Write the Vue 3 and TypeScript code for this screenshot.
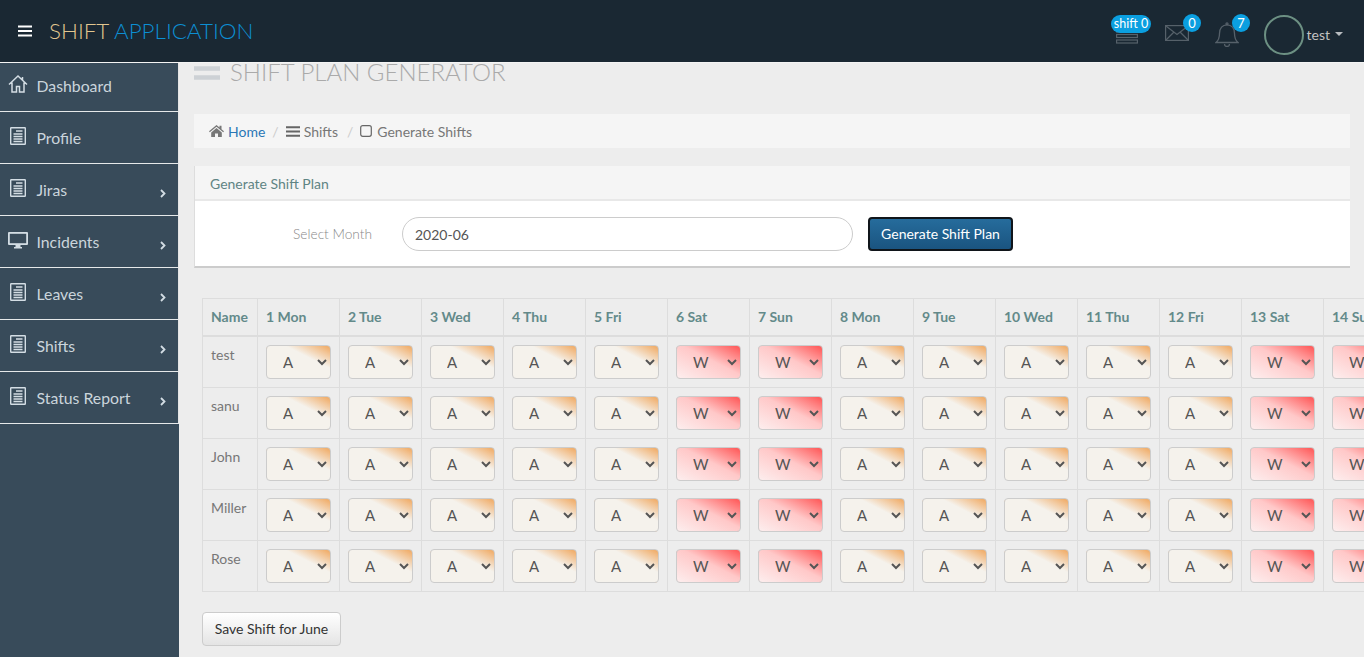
<script setup lang="ts">
interface NavItem { label: string; icon: 'home' | 'doc' | 'monitor'; arrow: boolean }
const nav: NavItem[] = [
  { label: 'Dashboard', icon: 'home', arrow: false },
  { label: 'Profile', icon: 'doc', arrow: false },
  { label: 'Jiras', icon: 'doc', arrow: true },
  { label: 'Incidents', icon: 'monitor', arrow: true },
  { label: 'Leaves', icon: 'doc', arrow: true },
  { label: 'Shifts', icon: 'doc', arrow: true },
  { label: 'Status Report', icon: 'doc', arrow: true },
]
const names = ['Mon', 'Tue', 'Wed', 'Thu', 'Fri', 'Sat', 'Sun']
const days = Array.from({ length: 30 }, (_, i) => {
  const name = names[i % 7]
  return { n: i + 1, label: `${i + 1} ${name}`, weekend: name === 'Sat' || name === 'Sun' }
})
const people = ['test', 'sanu', 'John', 'Miller', 'Rose']
</script>

<template>
  <div class="page">
    <header class="topbar">
      <svg class="burger" width="14" height="12" viewBox="0 0 14 12"><path d="M0 1.500h14M0 6h14M0 10.500h14" stroke="#fff" stroke-width="2"/></svg>
      <div class="logo"><span class="logo-a">SHIFT</span> <span class="logo-b">APPLICATION</span></div>
      <div class="top-right">
        <div class="tool tool-stack">
          <svg width="22" height="16" viewBox="0 0 22 16" fill="none" stroke="#56616a" stroke-width="1.200"><rect x="0.600" y="1" width="20.800" height="3"/><rect x="0.600" y="6.500" width="20.800" height="3"/><rect x="0.600" y="12" width="20.800" height="3"/></svg>
          <span class="badge badge-wide">shift 0</span>
        </div>
        <div class="tool tool-mail">
          <svg width="24" height="16" viewBox="0 0 24 16" fill="none" stroke="#56616a" stroke-width="1.200"><rect x="0.600" y="0.600" width="22.800" height="14.800"/><path d="M1 1l11 8.500L23 1M1 15l8-8M23 15l-8-8"/></svg>
          <span class="badge">0</span>
        </div>
        <div class="tool tool-bell">
          <svg width="24" height="25" viewBox="0 0 24 25" fill="none" stroke="#56616a" stroke-width="1.300"><path d="M1 20.500c3-2.500 3.500-5 3.500-9C4.500 6 7.500 2.800 12 2.800S19.500 6 19.500 11.500c0 4 .5 6.500 3.500 9z"/><circle cx="12" cy="1.800" r="1"/><path d="M9.500 22a2.500 2.500 0 0 0 5 0"/></svg>
          <span class="badge">7</span>
        </div>
        <div class="avatar"></div>
        <span class="user">test</span>
        <span class="caret"></span>
      </div>
    </header>

    <div class="shell">
      <aside class="sidebar">
        <ul class="menu">
          <li v-for="item in nav" :key="item.label" class="menu-item">
            <svg v-if="item.icon === 'home'" class="mi" width="20" height="20" viewBox="0 0 20 20" fill="none" stroke="#d3dde4" stroke-width="1.500"><path d="M1 10.500L10 2l9 8.500M4 8.500V18h4.500v-5.500h3V18H16V8.500M14.500 3v3"/></svg>
            <svg v-else-if="item.icon === 'doc'" class="mi" width="20" height="20" viewBox="0 0 20 20" fill="none" stroke="#d3dde4" stroke-width="1.400"><rect x="2.700" y="1.700" width="14.600" height="16.600" rx="0.500"/><path d="M8 5h6.500M5.500 8h9M5.500 10.500h9M5.500 13h9M5.500 15.500h9"/></svg>
            <svg v-else class="mi" width="20" height="20" viewBox="0 0 20 20"><path fill="#d3dde4" d="M1 2h18a1 1 0 0 1 1 1v11a1 1 0 0 1-1 1h-6.500v2H14v1.500H6V17h1.500v-2H1a1 1 0 0 1-1-1V3a1 1 0 0 1 1-1z"/><rect x="1.800" y="3.800" width="16.400" height="9.400" fill="#384b5a"/></svg>
            <span class="ml">{{ item.label }}</span>
            <svg v-if="item.arrow" class="chev" width="6" height="9" viewBox="0 0 6 9" fill="none" stroke="#d3dde4" stroke-width="1.800"><path d="M1 1l3.500 3.500L1 8"/></svg>
          </li>
        </ul>
      </aside>

      <main class="main">
        <div class="title-row">
          <svg class="title-icon" width="26" height="14" viewBox="0 0 26 14"><path d="M0 2.500h26M0 11.500h26" stroke="#cdd1d5" stroke-width="4.500"/></svg>
          <h1 class="title">SHIFT PLAN GENERATOR</h1>
        </div>

        <nav class="crumbs">
          <svg width="15" height="12" viewBox="0 0 15 12"><path fill="#777" d="M7.500 0L0 6.300l.8.900L7.500 1.700l6.700 5.500.8-.9L12.500 4.200V.8h-2v1.700zM2.200 7.500V12h3.800V8.500h3V12h3.800V7.500L7.500 3.100z"/></svg>
          <a class="crumb-link">Home</a>
          <span class="sep">/</span>
          <svg width="14" height="11" viewBox="0 0 14 11"><path d="M0 1.200h14M0 5.500h14M0 9.800h14" stroke="#666" stroke-width="2"/></svg>
          <span>Shifts</span>
          <span class="sep sep-last">/</span>
          <svg class="check" width="12" height="12" viewBox="0 0 12 12" fill="none"><rect x="0.700" y="0.700" width="10.600" height="10.600" rx="2" stroke="#666" stroke-width="1.200"/></svg>
          <span class="crumb-last">Generate Shifts</span>
        </nav>

        <section class="panel">
          <div class="panel-head">Generate Shift Plan</div>
          <form class="panel-body" @submit.prevent>
            <label class="field-label" for="month">Select Month</label>
            <input id="month" class="month" value="2020-06" />
            <button class="gen">Generate Shift Plan</button>
          </form>
        </section>

        <div class="table-wrap">
          <table class="grid">
            <thead>
              <tr>
                <th class="name-col">Name</th>
                <th v-for="d in days" :key="d.n">{{ d.label }}</th>
              </tr>
            </thead>
            <tbody>
              <tr v-for="p in people" :key="p">
                <td class="name-col">{{ p }}</td>
                <td v-for="d in days" :key="d.n">
                  <select class="shift" :class="{ off: d.weekend }" :value="d.weekend ? 'W' : 'A'">
                    <option>A</option>
                    <option>B</option>
                    <option>W</option>
                  </select>
                </td>
              </tr>
            </tbody>
          </table>
        </div>

        <button class="save">Save Shift for June</button>
      </main>
    </div>
  </div>
</template>

<style scoped>
.page {
  height: 657px;
  width: 1364px;
  overflow: hidden;
  display: flex;
  flex-direction: column;
  background: #ededed;
  font-family: Lato, "Open Sans", sans-serif;
  font-size: 14px;
}
.topbar {
  flex: none;
  box-sizing: border-box;
  height: 63px;
  border-bottom: 1px solid #f4f4f4;
  background: #1a2833;
  display: flex;
  align-items: center;
  padding-left: 18px;
}
.burger { flex: none; }
.logo {
  margin-left: 17px;
  margin-top: -1px;
  font-size: 22.400px;
  font-weight: 300;
  white-space: pre;
}
.logo-a { color: #e2c68f; }
.logo-b { color: #0c8fd3; }
.top-right {
  margin-left: auto;
  display: flex;
  align-items: center;
  height: 100%;
  padding-right: 21px;
}
.tool { position: relative; display: flex; }
.tool-stack { margin-top: 10px; margin-right: 27px; }
.tool-mail { margin-top: 3px; margin-right: 26px; }
.tool-bell { margin-top: 6px; margin-right: 25px; }
.badge {
  position: absolute;
  height: 18px;
  min-width: 18px;
  border-radius: 9px;
  background: #0b9fe0;
  color: #fff;
  font-size: 13px;
  line-height: 18px;
  text-align: center;
}
.tool-stack .badge-wide { left: -5px; top: -13px; width: 40px; white-space: nowrap; font-size: 12.500px; }
.tool-mail .badge { top: -11px; left: 18px; }
.tool-bell .badge { top: -8px; left: 17px; }
.avatar {
  width: 40px;
  height: 40px;
  box-sizing: border-box;
  border: 2px solid #6c9083;
  border-radius: 50%;
  margin-top: 8px;
}
.user { color: #c2c2c2; margin-left: 2.500px; margin-top: 7px; }
.caret {
  margin-left: 5px;
  margin-top: 6px;
  border-top: 4px solid #b8bcc0;
  border-left: 4px solid transparent;
  border-right: 4px solid transparent;
}
.shell { flex: 1; display: flex; min-height: 0; }
.sidebar { flex: none; width: 179px; background: #384b5a; }
.menu { margin: 0; padding: 0; list-style: none; }
.menu-item {
  box-sizing: border-box;
  height: 52px;
  width: 179px;
  display: flex;
  align-items: center;
  position: relative;
  border-bottom: 1px solid #e6e9ea;
  border-right: 1px solid #e4e4e4;
  padding-left: 8px;
  padding-bottom: 1px;
  color: #cbd5dc;
  font-size: 15.800px;
}
.menu-item:first-child { height: 49px; padding-bottom: 3px; }
.mi { flex: none; margin-top: -3px; }
.ml { margin-left: 8.500px; }
.chev { position: absolute; left: 160px; top: 25px; }
.main { flex: 1; min-width: 0; padding-left: 15px; overflow: hidden; }
.title-row { display: flex; align-items: center; height: 20px; }
.title-icon { margin-top: 0; flex: none; }
.title {
  margin: -3px 0 0 10px;
  font-size: 24px;
  font-weight: 300;
  line-height: 20px;
  color: #aaa;
  white-space: nowrap;
}
.crumbs {
  margin-top: 31px;
  margin-right: 14px;
  height: 34px;
  background: #f5f5f5;
  display: flex;
  align-items: center;
  padding-left: 15px;
  gap: 4px;
  color: #777;
}
.crumb-link { color: #2a77b5; }
.sep { color: #ccc; margin: 0 3px; }
.sep-last { margin-left: 5px; }
.check { margin-top: -1px; }
.crumb-last { margin-left: 1px; }
.panel {
  margin-top: 18px;
  margin-right: 14px;
  box-sizing: border-box;
  border-left: 1px solid #ddd;
  border-bottom: 2px solid #ccc;
  background: #fff;
}
.panel-head {
  height: 33px;
  line-height: 35px;
  padding-left: 15px;
  background: #f5f5f5;
  border-bottom: 2px solid #e8e8e8;
  color: #5f8484;
}
.panel-body {
  display: flex;
  align-items: center;
  height: 65px;
  padding-top: 1px;
  box-sizing: border-box;
}
.field-label {
  box-sizing: border-box;
  width: 177px;
  text-align: right;
  font-weight: 300;
  font-size: 13.700px;
  color: #888;
  margin-top: -2px;
}
.month {
  box-sizing: border-box;
  margin-left: 30px;
  width: 451px;
  height: 34px;
  border: 1px solid #ccc;
  border-radius: 17px;
  padding: 0 12px;
  font: 14px Lato, sans-serif;
  color: #555;
  background: #fff;
  outline: none;
}
.gen {
  margin-left: 15px;
  box-sizing: border-box;
  width: 145px;
  height: 34px;
  border: 2px solid #10151a;
  border-radius: 4px;
  background: linear-gradient(#266c9c, #1a5480);
  color: #fff;
  font: 14px Lato, sans-serif;
  padding: 0 0 2px;
}
.table-wrap { margin-top: 30px; margin-left: 8px; overflow: hidden; }
.grid {
  border-collapse: collapse;
  color: #777;
}
.grid th, .grid td {
  border: 1px solid #ddd;
  padding: 8px;
  text-align: left;
  vertical-align: top;
  line-height: 20px;
  white-space: nowrap;
  box-sizing: border-box;
}
.grid th {
  color: #638a8a;
  font-weight: 700;
  height: 37px;
  padding-top: 8px;
  padding-bottom: 7px;
  border-bottom-width: 2px;
}
.grid td { height: 51px; }
.grid .name-col { width: 55px; min-width: 55px; max-width: 55px; }
.shift {
  display: block;
  box-sizing: border-box;
  width: 65px;
  height: 34px;
  padding: 0 0 0 12px;
  border: 1px solid #ccc;
  border-radius: 4px;
  background: linear-gradient(to top right, #f5f2ec 0%, #f5f2ec 65%, #f0a860 100%);
  color: #555;
  font: 15px Lato, sans-serif;
  outline: none;
}
.shift.off {
  background: linear-gradient(to top right, #fdeeee 0%, #ffc8c8 55%, #ff5555 100%);
}
.save {
  display: block;
  margin: 20px 0 0 8px;
  box-sizing: border-box;
  width: 139px;
  height: 34px;
  border: 1px solid #ccc;
  border-radius: 4px;
  background: linear-gradient(#fff, #e4e4e4);
  color: #333;
  font: 14px Lato, sans-serif;
  padding: 0 0 1px;
}
</style>
